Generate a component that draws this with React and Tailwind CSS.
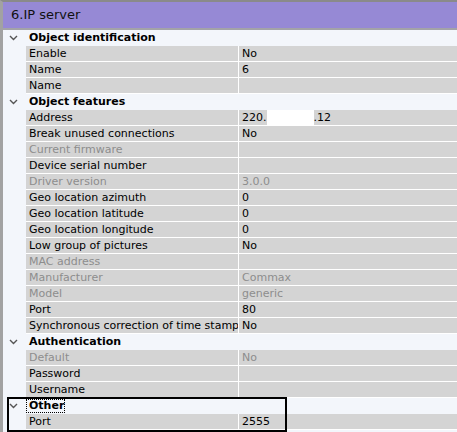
import React from "react";

const groups = [
  {
    title: "Object identification",
    rows: [
      ["Enable", "No"],
      ["Name", "6"],
      ["Name", ""],
    ],
  },
  {
    title: "Object features",
    rows: [
      ["Address", "addr"],
      ["Break unused connections", "No"],
      ["Current firmware", "", true],
      ["Device serial number", ""],
      ["Driver version", "3.0.0", true],
      ["Geo location azimuth", "0"],
      ["Geo location latitude", "0"],
      ["Geo location longitude", "0"],
      ["Low group of pictures", "No"],
      ["MAC address", "", true],
      ["Manufacturer", "Commax", true],
      ["Model", "generic", true],
      ["Port", "80"],
      ["Synchronous correction of time stamps", "No"],
    ],
  },
  {
    title: "Authentication",
    rows: [
      ["Default", "No", true],
      ["Password", ""],
      ["Username", ""],
    ],
  },
];

function Chevron() {
  return (
    <svg width="9" height="6" viewBox="0 0 9 6" className="shrink-0">
      <path d="M1 1 L4.5 4.5 L8 1" fill="none" stroke="#555" strokeWidth="1.4" />
    </svg>
  );
}

function GroupRow({ title, focus }) {
  return (
    <div className="flex h-4 items-center bg-[#f3f6fb]">
      <div className="flex w-[23px] shrink-0 justify-center pr-[2px]">
        <Chevron />
      </div>
      <span
        className={
          "pl-[3px] font-bold leading-[14px] text-black " +
          (focus ? "outline outline-1 outline-dotted outline-black -outline-offset-1 pr-[1px]" : "")
        }
      >
        {title}
      </span>
    </div>
  );
}

function Row({ label, value, dim }) {
  const text = dim ? "text-[#8d8d8d]" : "text-black";
  return (
    <div className="flex h-4 bg-[#f3f6fb]">
      <div className="w-[23px] shrink-0" />
      <div className="flex flex-1 border-b border-white bg-[#d4d4d4]">
        <div className={"w-[212px] shrink-0 overflow-hidden whitespace-nowrap pl-[3px] leading-[15px] " + text}>
          {label}
        </div>
        <div className={"flex-1 border-l border-white pl-[3px] leading-[15px] whitespace-nowrap " + text}>
          {value === "addr" ? (
            <span className="flex">
              220.
              <span className="inline-block h-[15px] w-[47px] bg-white" />
              .12
            </span>
          ) : (
            value
          )}
        </div>
      </div>
    </div>
  );
}

export default function App() {
  return (
    <div
      className="relative h-[432px] w-[457px] overflow-hidden bg-[#f3f6fb] text-[11px]"
      style={{ fontFamily: "'DejaVu Sans', Tahoma, sans-serif" }}
    >
      <div className="flex h-full border-l-[3px] border-t-2 border-l-[#a2a2a2] border-t-[#8a8a8a]">
        <div className="flex flex-1 flex-col">
          <div className="flex h-[28px] shrink-0 items-center border-b-2 border-[#a3a3a8] bg-[#9689d5] pl-[8px] text-[13px] text-[#111]">
            6.IP server
          </div>
          {groups.map((g) => (
            <div key={g.title}>
              <GroupRow title={g.title} />
              {g.rows.map((r, i) => (
                <Row key={i} label={r[0]} value={r[1]} dim={r[2]} />
              ))}
            </div>
          ))}
          <GroupRow title="Other" focus />
          <Row label="Port" value="2555" />
        </div>
      </div>
      <div className="absolute left-[7px] top-[397px] h-[35px] w-[280px] border-2 border-black" />
    </div>
  );
}
